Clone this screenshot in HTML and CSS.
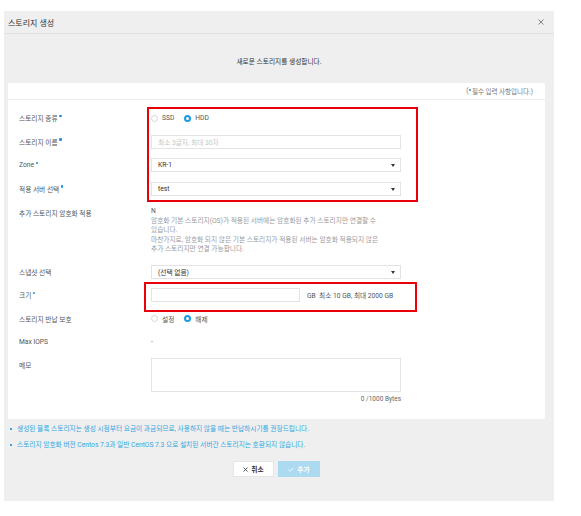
FILE: index.html
```html
<!DOCTYPE html>
<html lang="ko">
<head>
<meta charset="utf-8">
<title>스토리지 생성</title>
<link rel="stylesheet" href="styles.css">
</head>
<body>
<div class="dialog">
  <div class="header">
    <span class="title">스토리지 생성</span>
    <svg class="close" width="6" height="6" viewBox="0 0 6 6"><path d="M0.5 0.5L5.5 5.5M5.5 0.5L0.5 5.5" stroke="#777" stroke-width="0.9"/></svg>
  </div>
  <div class="intro">새로운 스토리지를 생성합니다.</div>
  <div class="panel">
    <div class="req-note">(<span class="req-dot"></span>필수 입력 사항입니다.)</div>
    <div class="form">
      <div class="label">스토리지 종류<span class="req"></span></div>
      <div class="ctrl radios">
        <span class="radio-item"><span class="radio"></span>SSD</span>
        <span class="radio-item"><span class="radio on"></span>HDD</span>
      </div>

      <div class="label">스토리지 이름<span class="req"></span></div>
      <div class="ctrl"><div class="input placeholder">최소 3글자, 최대 30자</div></div>

      <div class="label">Zone<span class="req"></span></div>
      <div class="ctrl"><div class="input select">KR-1<span class="caret"></span></div></div>

      <div class="label">적용 서버 선택<span class="req"></span></div>
      <div class="ctrl"><div class="input select">test<span class="caret"></span></div></div>

      <div class="label top tall">추가 스토리지 암호화 적용</div>
      <div class="ctrl desc tall">
        <div class="value">N</div>
        <div class="note">암호화 기본 스토리지(OS)가 적용된 서버에는 암호화된 추가 스토리지만 연결할 수<br>있습니다.</div>
        <div class="note">마찬가지로, 암호화 되지 않은 기본 스토리지가 적용된 서버는 암호화 적용되지 않은<br>추가 스토리지만 연결 가능합니다.</div>
      </div>

      <div class="label">스냅샷 선택</div>
      <div class="ctrl"><div class="input select">(선택 없음)<span class="caret"></span></div></div>

      <div class="label">크기<span class="req"></span></div>
      <div class="ctrl size"><div class="input short"></div><span class="unit">GB &nbsp;최소 10 GB, 최대 2000 GB</span></div>

      <div class="label">스토리지 반납 보호</div>
      <div class="ctrl radios">
        <span class="radio-item"><span class="radio"></span>설정</span>
        <span class="radio-item"><span class="radio on"></span>해제</span>
      </div>

      <div class="label">Max IOPS</div>
      <div class="ctrl"><span class="dash">-</span></div>

      <div class="label top memo-label">메모</div>
      <div class="ctrl memo-ctrl">
        <div class="textarea"></div>
        <div class="counter">0 /1000 Bytes</div>
      </div>
    </div>
  </div>
  <ul class="notices">
    <li>생성된 블록 스토리지는 생성 시점부터 요금이 과금되므로, 사용하지 않을 때는 반납하시기를 권장드립니다.</li>
    <li>스토리지 암호화 버전 Centos 7.3과 일반 CentOS 7.3 으로 설치된 서버간 스토리지는 호환되지 않습니다.</li>
  </ul>
  <div class="actions">
    <button class="btn cancel"><svg width="5" height="5" viewBox="0 0 5 5"><path d="M0.5 0.5L4.5 4.5M4.5 0.5L0.5 4.5" stroke="#444" stroke-width="0.9"/></svg>취소</button>
    <button class="btn confirm"><svg width="6" height="5" viewBox="0 0 6 5"><path d="M0.5 2.6L2.2 4.2L5.5 0.8" fill="none" stroke="#fff" stroke-width="0.9"/></svg>추가</button>
  </div>
</div>
<div class="mark mark-a"></div>
<div class="mark mark-b"></div>
</body>
</html>
```
FILE: styles.css
```css
* { box-sizing: border-box; }
html, body { margin: 0; padding: 0; background: #fff; }
body {
  font-family: "Roboto", "Noto Sans CJK KR", sans-serif;
  font-size: 6.7px;
  color: #555;
  position: relative;
  width: 581px;
  height: 516px;
  overflow: hidden;
}
.dialog {
  margin: 11px 0 0 4px;
  width: 550px;
  height: 490px;
  background: #efefef;
}
.header {
  height: 23px;
  border-bottom: 1px solid #e2e2e2;
  display: flex;
  align-items: center;
  justify-content: space-between;
  padding: 0 10px 0 4px;
}
.title { font-size: 8px; color: #333; }
.close { display: block; }
.intro {
  height: 49px;
  display: flex;
  align-items: center;
  justify-content: center;
  padding-top: 4px;
  color: #333;
  font-size: 6.7px;
}
.panel {
  margin: 0 9px 0 4px;
  background: #fff;
  height: 336px;
  border-radius: 1px;
}
.req-note {
  height: 17px;
  border-bottom: 1px solid #ececec;
  display: flex;
  align-items: center;
  justify-content: flex-end;
  padding-right: 12px;
  color: #777;
  font-size: 6.5px;
}
.req-dot {
  width: 2.6px;
  height: 2.6px;
  border-radius: 50%;
  background: #1a8fe0;
  margin: 0 0.5px 2px 0.5px;
}
.form {
  display: grid;
  grid-template-columns: 132px 250px;
  row-gap: 9.5px;
  padding: 11px 0 0 11px;
}
.label {
  height: 14px;
  display: flex;
  align-items: center;
  color: #555;
  white-space: nowrap;
}
.label.top { align-items: flex-start; }
.req {
  width: 2.6px;
  height: 2.6px;
  border-radius: 50%;
  background: #1a8fe0;
  margin-left: 1.5px;
  margin-bottom: 4px;
}
.ctrl {
  height: 14px;
  display: flex;
  align-items: center;
}
.tall { height: 50px; }
.radios { gap: 10px; }
.radio-item { display: flex; align-items: center; color: #555; }
.radio {
  width: 7px;
  height: 7px;
  border-radius: 50%;
  border: 1px solid #d6d6d6;
  background: #fff;
  margin-right: 4px;
}
.radio.on { border: 2px solid #1a9be6; }
.input {
  width: 250px;
  height: 14px;
  border: 1px solid #e3e3e3;
  background: #fff;
  display: flex;
  align-items: center;
  padding: 0 6px;
  color: #333;
  position: relative;
}
.placeholder { color: #c6c6c6; }
.caret {
  position: absolute;
  right: 5px;
  top: 5px;
  border-left: 2.2px solid transparent;
  border-right: 2.2px solid transparent;
  border-top: 3px solid #333;
}
.desc {
  flex-direction: column;
  align-items: flex-start;
  padding-top: 2px;
  line-height: 9.6px;
  white-space: nowrap;
}
.desc .value { color: #555; }
.desc .note { color: #9a9a9a; }
.label.tall { padding-top: 3px; }
.size .input.short { width: 149px; }
.unit { margin-left: 7px; color: #555; }
.dash { color: #777; }
.memo-ctrl {
  height: auto;
  flex-direction: column;
  align-items: stretch;
  margin-top: -1px;
}
.memo-label { padding-top: 1px; }
.textarea {
  height: 34px;
  border: 1px solid #e3e3e3;
  background: #fff;
}
.counter {
  text-align: right;
  color: #666;
  line-height: 8px;
  margin-top: 3px;
  font-size: 6.5px;
}
.notices {
  list-style: none;
  margin: 5px 0 0;
  padding: 0 0 0 6px;
  color: #30a8e2;
}
.notices li {
  line-height: 10px;
  position: relative;
  padding-left: 7px;
  margin-bottom: 6px;
  white-space: nowrap;
}
.notices li::before {
  content: "";
  position: absolute;
  left: 0;
  top: 4px;
  width: 2px;
  height: 2px;
  background: #30a8e2;
}
.actions {
  display: flex;
  justify-content: center;
  gap: 4px;
  margin-top: 11px;
  padding-right: 5px;
}
.btn {
  height: 16px;
  width: 41px;
  border: 1px solid #e6e6e6;
  display: flex;
  align-items: center;
  justify-content: center;
  gap: 3px;
  font-family: inherit;
  font-size: 6.7px;
  font-weight: bold;
  padding: 0;
}
.cancel { background: #fff; color: #333; }
.confirm { background: #acdaf0; border-color: #acdaf0; color: #fff; width: 42px; }
.btn svg { display: block; }
.mark {
  position: absolute;
  border: 2px solid #e8000b;
}
.mark-a { left: 147px; top: 107px; width: 271px; height: 95px; }
.mark-b { left: 144px; top: 282px; width: 273px; height: 30px; }
```
